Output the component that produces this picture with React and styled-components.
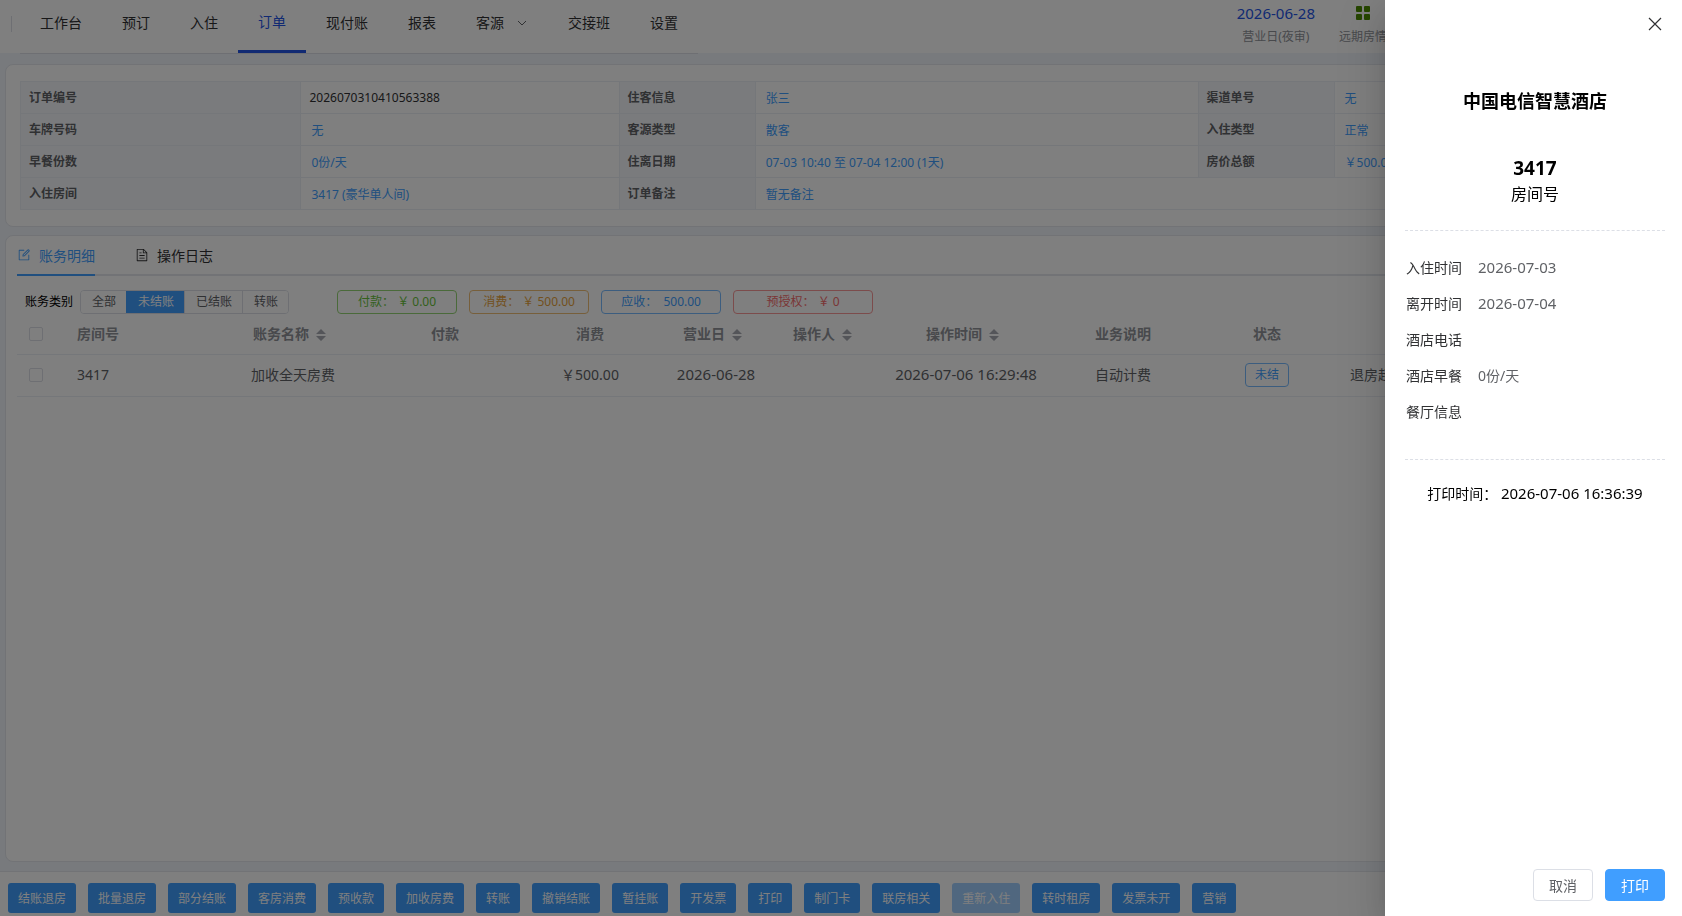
import React, { useState } from "react";
import styled, { createGlobalStyle, css } from "styled-components";

const NAV = ["工作台", "预订", "入住", "订单", "现付账", "报表", "客源", "交接班", "设置"];

const FILTERS = ["全部", "未结账", "已结账", "转账"];

const ACTIONS = [
  "结账退房",
  "批量退房",
  "部分结账",
  "客房消费",
  "预收款",
  "加收房费",
  "转账",
  "撤销结账",
  "暂挂账",
  "开发票",
  "打印",
  "制门卡",
  "联房相关",
  "重新入住",
  "转时租房",
  "发票未开",
  "营销",
];

const STAY = [
  { label: "入住时间", date: "2026-07-03" },
  { label: "离开时间", date: "2026-07-04" },
  { label: "酒店电话" },
  { label: "酒店早餐", text: "0份/天" },
  { label: "餐厅信息" },
];

const EditIcon = () => (
  <svg width="14" height="14" viewBox="0 0 1024 1024" fill="currentColor">
    <path d="M832 512a32 32 0 1 1 64 0v352a32 32 0 0 1-32 32H160a32 32 0 0 1-32-32V160a32 32 0 0 1 32-32h352a32 32 0 0 1 0 64H192v640h640V512z" />
    <path d="m469.952 554.24 52.8-7.552L847.104 222.4a32 32 0 1 0-45.248-45.248L477.44 501.44l-7.552 52.8zm422.4-422.4a96 96 0 0 1 0 135.808l-331.84 331.84a32 32 0 0 1-18.112 9.088L436.8 623.68a32 32 0 0 1-36.224-36.224l15.104-105.6a32 32 0 0 1 9.024-18.112l331.904-331.84a96 96 0 0 1 135.744 0z" />
  </svg>
);

const DocumentIcon = () => (
  <svg width="14" height="14" viewBox="0 0 1024 1024" fill="currentColor">
    <path d="M832 384H576V128H192v768h640V384zm-26.496-64L640 154.496V320h165.504zM160 64h480l256 256v608a32 32 0 0 1-32 32H160a32 32 0 0 1-32-32V96a32 32 0 0 1 32-32zm160 448h384v64H320v-64zm0-192h160v64H320v-64zm0 384h384v64H320v-64z" />
  </svg>
);

const GridIcon = () => (
  <svg width="14" height="14" viewBox="0 0 14 14" fill="#4c8c00">
    <rect x="0" y="0" width="6" height="6" rx="1" />
    <rect x="8" y="0" width="6" height="6" rx="1" />
    <rect x="0" y="8" width="6" height="6" rx="1" />
    <rect x="8" y="8" width="6" height="6" rx="1" />
  </svg>
);

const ArrowIcon = () => (
  <svg width="12" height="12" viewBox="0 0 12 12" fill="none" stroke="#606266">
    <path d="M2 4l4 4 4-4" />
  </svg>
);

const CloseIcon = () => (
  <svg width="14" height="14" viewBox="0 0 14 14" fill="none" stroke="#303133" strokeWidth="1.2">
    <path d="M1 1l12 12M13 1L1 13" />
  </svg>
);

const SortIcon = () => (
  <Caret width="24" height="14" viewBox="0 0 24 14" fill="#a8abb2">
    <path d="M7 6l5-5 5 5zM7 8l5 5 5-5z" />
  </Caret>
);

const App = () => {
  const [filter, setFilter] = useState("未结账");
  const [open, setOpen] = useState(true);

  const closeDrawer = () => {
    setOpen(false);
  };

  return (
    <React.Fragment>
      <GlobalStyle />
      <Page>
        <Header>
          <Divider />
          <Menu>
            {NAV.map((name) => (
              <MenuItem key={name} href="#" $active={name === "订单"}>
                {name}
                {name === "客源" && <ArrowIcon />}
              </MenuItem>
            ))}
          </Menu>
          <HeaderRight>
            <HeaderInfo>
              <BusinessDay>2026-06-28</BusinessDay>
              <small>营业日(夜审)</small>
            </HeaderInfo>
            <HeaderInfo>
              <GridIcon />
              <small>远期房情</small>
            </HeaderInfo>
          </HeaderRight>
        </Header>

        <Main>
          <InfoCard>
            <InfoTable>
              <colgroup>
                <col style={{ width: "17.1%" }} />
                <col style={{ width: "19.4%" }} />
                <col style={{ width: "8.3%" }} />
                <col style={{ width: "27%" }} />
                <col style={{ width: "8.3%" }} />
                <col />
              </colgroup>
              <tbody>
                <tr>
                  <th>订单编号</th>
                  <td>2026070310410563388</td>
                  <th>住客信息</th>
                  <td><InfoLink href="#">张三</InfoLink></td>
                  <th>渠道单号</th>
                  <td><InfoLink href="#">无</InfoLink></td>
                </tr>
                <tr>
                  <th>车牌号码</th>
                  <td><InfoLink href="#">无</InfoLink></td>
                  <th>客源类型</th>
                  <td><InfoLink href="#">散客</InfoLink></td>
                  <th>入住类型</th>
                  <td><InfoLink href="#">正常</InfoLink></td>
                </tr>
                <tr>
                  <th>早餐份数</th>
                  <td><InfoLink href="#">0份/天</InfoLink></td>
                  <th>住离日期</th>
                  <td><InfoLink href="#">07-03 10:40 至 07-04 12:00 (1天)</InfoLink></td>
                  <th>房价总额</th>
                  <td><InfoLink href="#">￥500.00</InfoLink></td>
                </tr>
                <tr>
                  <th>入住房间</th>
                  <td><InfoLink href="#">3417 (豪华单人间)</InfoLink></td>
                  <th>订单备注</th>
                  <td colSpan={3}><InfoLink href="#">暂无备注</InfoLink></td>
                </tr>
              </tbody>
            </InfoTable>
          </InfoCard>

          <BillCard>
            <Tabs>
              <Tab $active><EditIcon />账务明细</Tab>
              <Tab><DocumentIcon />操作日志</Tab>
            </Tabs>
            <Toolbar>
              <span id="bill-type">账务类别</span>
              <RadioGroup role="radiogroup" aria-labelledby="bill-type">
                {FILTERS.map((name) => (
                  <RadioButton key={name} $active={filter === name}>
                    <input
                      type="radio"
                      name="bill"
                      checked={filter === name}
                      onChange={() => setFilter(name)}
                    />
                    {name}
                  </RadioButton>
                ))}
              </RadioGroup>
              <Totals>
                <Total $color="#67c23a" $border="#95d475">付款： ￥ 0.00</Total>
                <Total $color="#e6a23c" $border="#eebe77">消费： ￥ 500.00</Total>
                <Total $color="#409eff" $border="#79bbff">应收：  500.00</Total>
                <Total $color="#f56c6c" $border="#f89898" $wide>预授权： ￥ 0</Total>
              </Totals>
            </Toolbar>
            <BillTable>
              <colgroup>
                <col style={{ width: 50 }} />
                <col style={{ width: 152 }} />
                <col style={{ width: 148 }} />
                <col style={{ width: 156 }} />
                <col style={{ width: 134 }} />
                <col style={{ width: 118 }} />
                <col style={{ width: 102 }} />
                <col style={{ width: 178 }} />
                <col style={{ width: 136 }} />
                <col style={{ width: 152 }} />
                <col />
              </colgroup>
              <thead>
                <tr>
                  <th className="left"><Checkbox type="checkbox" aria-label="全选" /></th>
                  <th className="left">房间号</th>
                  <th>账务名称<SortIcon /></th>
                  <th>付款</th>
                  <th>消费</th>
                  <th>营业日<SortIcon /></th>
                  <th>操作人<SortIcon /></th>
                  <th>操作时间<SortIcon /></th>
                  <th>业务说明</th>
                  <th>状态</th>
                  <th />
                </tr>
              </thead>
              <tbody>
                <tr>
                  <td className="left"><Checkbox type="checkbox" aria-label="3417" /></td>
                  <td className="left">3417</td>
                  <td>加收全天房费</td>
                  <td />
                  <td>￥500.00</td>
                  <td><Time>2026-06-28</Time></td>
                  <td />
                  <td><Time>2026-07-06 16:29:48</Time></td>
                  <td>自动计费</td>
                  <td><Status>未结</Status></td>
                  <td className="note">退房超时</td>
                </tr>
              </tbody>
            </BillTable>
          </BillCard>
        </Main>

        <Footer>
          {ACTIONS.map((name) => (
            <ActionButton key={name} disabled={name === "重新入住"}>
              {name}
            </ActionButton>
          ))}
        </Footer>
      </Page>

      {open && (
        <Overlay>
          <Drawer role="dialog" aria-labelledby="hotel">
            <DrawerHeader>
              <CloseButton aria-label="关闭" onClick={closeDrawer}>
                <CloseIcon />
              </CloseButton>
            </DrawerHeader>
            <Hotel id="hotel">中国电信智慧酒店</Hotel>
            <Room>
              <strong>3417</strong>
              <span>房间号</span>
            </Room>
            <StayList>
              {STAY.map(({ label, date, text }) => (
                <StayRow key={label}>
                  <dt>{label}</dt>
                  <dd>{date ? <Time>{date}</Time> : text}</dd>
                </StayRow>
              ))}
            </StayList>
            <PrintTime>
              打印时间： <Time>2026-07-06 16:36:39</Time>
            </PrintTime>
            <DrawerFooter>
              <Button onClick={closeDrawer}>取消</Button>
              <Button $primary>打印</Button>
            </DrawerFooter>
          </Drawer>
        </Overlay>
      )}
    </React.Fragment>
  );
};

const GlobalStyle = createGlobalStyle`
  * {
    box-sizing: border-box;
  }
  body {
    margin: 0;
    overflow: hidden;
    font-family: "Noto Sans", "Noto Sans CJK SC", sans-serif;
    font-size: 14px;
    line-height: 20px;
    color: #303133;
  }
  a {
    text-decoration: none;
  }
  button {
    font-family: inherit;
    cursor: pointer;
  }
`;

const Page = styled.div`
  display: flex;
  flex-direction: column;
  height: 100vh;
  background: #f0f4fa;
`;

const Header = styled.header`
  display: flex;
  height: 53px;
  padding-left: 11px;
  background: #fff;
`;

const Divider = styled.div`
  width: 1px;
  height: 16px;
  margin: 16px 8px 0 0;
  background: #dcdfe6;
`;

const Menu = styled.nav`
  display: flex;
  height: 54px;
  border-bottom: 1px solid #dcdfe6;
`;

const MenuItem = styled.a`
  display: flex;
  align-items: center;
  gap: 12px;
  padding: 0 20px 7px;
  color: #303133;
  white-space: nowrap;

  ${(props) =>
    props.$active &&
    css`
      padding-bottom: 6px;
      border-bottom: 3px solid #2354e6;
      color: #2354e6;
    `}
`;

const HeaderRight = styled.div`
  display: flex;
  gap: 24px;
  margin-left: auto;
  padding-right: 295px;
`;

const HeaderInfo = styled.div`
  display: flex;
  flex-direction: column;
  align-items: center;
  gap: 7px;
  padding-top: 6px;
  white-space: nowrap;

  & small {
    font-size: 12px;
    line-height: 20px;
    color: #909399;
  }
`;

const Time = styled.time`
  font-size: 15px;
  line-height: 18px;
`;

const BusinessDay = styled(Time)`
  height: 14px;
  line-height: 14px;
  color: #2354e6;
`;

const Main = styled.main`
  display: flex;
  flex: 1;
  flex-direction: column;
  gap: 8px;
  padding: 11px 5px 9px;
`;

const Card = styled.section`
  border: 1px solid #e4e7ed;
  border-radius: 8px;
  background: #fff;
`;

const InfoCard = styled(Card)`
  padding: 16px 15px 16px 14px;
`;

const BillCard = styled(Card)`
  flex: 1;
  padding: 0 11px;
`;

const InfoTable = styled.table`
  width: 100%;
  table-layout: fixed;
  border-collapse: collapse;
  font-size: 12px;
  text-align: left;

  & th,
  & td {
    height: 32px;
    padding: 0 8px;
    border: 1px solid #ebeef5;
    color: #303133;
  }

  & th {
    background: #f5f7fa;
    color: #606266;
    font-weight: bold;
  }
`;

const InfoLink = styled.a`
  display: inline-block;
  padding: 2px 2px 0;
  color: #409eff;
`;

const Tabs = styled.div`
  display: flex;
  gap: 40px;
  height: 40px;
  border-bottom: 2px solid #e4e7ed;
`;

const Tab = styled.button`
  display: flex;
  align-items: center;
  gap: 8px;
  height: 40px;
  padding: 0;
  border: 0;
  border-bottom: 2px solid ${(props) => (props.$active ? "#409eff" : "transparent")};
  background: none;
  color: ${(props) => (props.$active ? "#409eff" : "#303133")};
  font-size: 14px;
`;

const Toolbar = styled.div`
  display: flex;
  align-items: center;
  gap: 7px;
  margin-top: 14px;
  padding-left: 8px;
  color: #000;
  font-size: 12px;
`;

const RadioGroup = styled.div`
  display: flex;
  height: 24px;
  overflow: hidden;
  border: 1px solid #dcdfe6;
  border-radius: 4px;
`;

const RadioButton = styled.label`
  padding: 0 10px 0 11px;
  border-left: 1px solid ${(props) => (props.$active ? "#409eff" : "#dcdfe6")};
  background: ${(props) => (props.$active ? "#409eff" : "#fff")};
  color: ${(props) => (props.$active ? "#fff" : "#606266")};
  line-height: 22px;
  cursor: pointer;

  &:first-child {
    border-left: 0;
  }

  & input {
    position: absolute;
    opacity: 0;
  }
`;

const Totals = styled.div`
  display: flex;
  gap: 12px;
  margin-left: 41px;
`;

const Total = styled.span`
  width: ${(props) => (props.$wide ? "140px" : "120px")};
  height: 24px;
  border: 1px solid ${(props) => props.$border};
  border-radius: 4px;
  color: ${(props) => props.$color};
  line-height: 22px;
  text-align: center;
  white-space: pre;
`;

const BillTable = styled.table`
  width: 100%;
  table-layout: fixed;
  border-collapse: collapse;
  text-align: center;
  white-space: nowrap;

  & th,
  & td {
    height: 42px;
    padding: 0;
    border-bottom: 1px solid #ebeef5;
    color: #606266;
  }

  & th {
    height: 40px;
    color: #909399;
    font-weight: bold;
  }

  & .left {
    padding-left: 10px;
    text-align: left;
  }

  & .note {
    padding-left: 7px;
    text-align: left;
  }
`;

const Caret = styled.svg`
  vertical-align: middle;
`;

const Checkbox = styled.input`
  display: block;
  width: 14px;
  height: 14px;
  margin: 0 2px;
  appearance: none;
  border: 1px solid #dcdfe6;
  border-radius: 2px;
  background: #fff;

  &:checked {
    background: #409eff;
  }
`;

const Status = styled.span`
  display: inline-block;
  height: 24px;
  padding: 0 9px;
  border: 1px solid #79bbff;
  border-radius: 4px;
  color: #409eff;
  font-size: 12px;
  line-height: 22px;
  vertical-align: middle;
`;

const Footer = styled.footer`
  display: flex;
  gap: 12px;
  padding: 11px 8px 3px;
  border-top: 1px solid #e4e7ed;
  background: #fff;
`;

const ActionButton = styled.button`
  height: 30px;
  padding: 0 10px;
  border: 0;
  border-radius: 3px;
  background: #409eff;
  color: #fff;
  font-size: 12px;
  white-space: nowrap;

  &:disabled {
    background: #a0cfff;
    cursor: not-allowed;
  }
`;

const Overlay = styled.div`
  position: fixed;
  inset: 0;
  display: flex;
  justify-content: flex-end;
  background: rgba(0, 0, 0, 0.5);
`;

const Drawer = styled.aside`
  display: flex;
  flex-direction: column;
  width: 297px;
  padding: 17px 17px 15px 20px;
  background: #fff;
  box-shadow: 0 16px 48px 16px rgba(0, 0, 0, 0.08), 0 12px 32px rgba(0, 0, 0, 0.12),
    0 8px 16px -8px rgba(0, 0, 0, 0.16);
`;

const DrawerHeader = styled.div`
  display: flex;
  justify-content: flex-end;
  padding-right: 3px;
`;

const CloseButton = styled.button`
  display: flex;
  padding: 0;
  border: 0;
  background: none;
`;

const Hotel = styled.h3`
  margin: 58px 0 0;
  color: #000;
  font-size: 18px;
  line-height: 24px;
  text-align: center;
`;

const Room = styled.div`
  display: flex;
  flex-direction: column;
  align-items: center;
  margin-top: 42px;
  padding-bottom: 24px;
  border-bottom: 1px dashed #dcdfe6;
  color: #000;
  font-size: 16px;
  line-height: 24px;

  & strong {
    font-size: 19px;
    line-height: 27px;
  }
`;

const StayList = styled.dl`
  display: flex;
  flex-direction: column;
  gap: 16px;
  margin: 0;
  padding: 27px 1px 37px;
  border-bottom: 1px dashed #dcdfe6;
`;

const StayRow = styled.div`
  display: flex;
  gap: 16px;
  height: 20px;

  & dd {
    margin: 0;
    color: #606266;
  }
`;

const PrintTime = styled.p`
  margin: 24px 0 0;
  color: #000;
  text-align: center;
  white-space: nowrap;
`;

const DrawerFooter = styled.div`
  display: flex;
  justify-content: flex-end;
  gap: 12px;
  margin-top: auto;
`;

const Button = styled.button`
  width: 60px;
  height: 32px;
  padding: 0;
  border: 1px solid ${(props) => (props.$primary ? "#409eff" : "#dcdfe6")};
  border-radius: 4px;
  background: ${(props) => (props.$primary ? "#409eff" : "#fff")};
  color: ${(props) => (props.$primary ? "#fff" : "#606266")};
  font-size: 14px;
`;

export default App;
